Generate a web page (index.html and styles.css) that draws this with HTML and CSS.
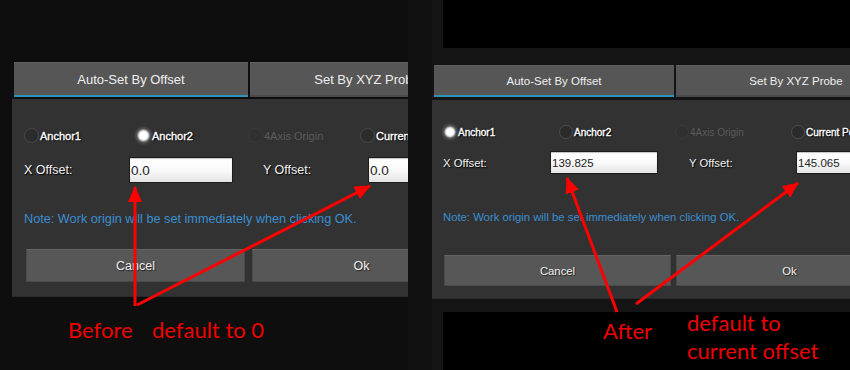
FILE: index.html
```html
<!DOCTYPE html>
<html lang="en">
<head>
<meta charset="UTF-8">
<meta name="viewport" content="width=device-width, initial-scale=1.0">
<title>Work Origin Offset - Before / After</title>
<link rel="stylesheet" href="styles.css">
</head>
<body>
<div class="page">

    <!-- before: offsets default to 0 -->
    <div class="shot before">
        <div class="dialog">
            <div class="tabs">
                <div class="tab active">Auto-Set By Offset</div>
                <div class="tab">Set By XYZ Probe</div>
            </div>
            <div class="panel">
                <div class="radios">
                    <label class="radio"><span class="dot"></span>Anchor1</label>
                    <label class="radio"><span class="dot on"></span>Anchor2</label>
                    <label class="radio off"><span class="dot"></span>4Axis Origin</label>
                    <label class="radio"><span class="dot"></span>Current Position</label>
                </div>
                <div class="offsets">
                    <span class="field-label">X Offset:</span>
                    <input class="field" type="text" value="0.0">
                    <span class="field-label second">Y Offset:</span>
                    <input class="field" type="text" value="0.0">
                </div>
                <p class="note">Note: Work origin will be set immediately when clicking OK.</p>
                <div class="actions">
                    <button>Cancel</button>
                    <button>Ok</button>
                </div>
            </div>
        </div>
    </div>

    <!-- after: offsets default to current offset -->
    <div class="shot after">
        <div class="band"></div>
        <div class="dialog">
            <div class="tabs">
                <div class="tab active">Auto-Set By Offset</div>
                <div class="tab">Set By XYZ Probe</div>
            </div>
            <div class="panel">
                <div class="radios">
                    <label class="radio"><span class="dot on"></span>Anchor1</label>
                    <label class="radio"><span class="dot"></span>Anchor2</label>
                    <label class="radio off"><span class="dot"></span>4Axis Origin</label>
                    <label class="radio"><span class="dot"></span>Current Position</label>
                </div>
                <div class="offsets">
                    <span class="field-label">X Offset:</span>
                    <input class="field" type="text" value="139.825">
                    <span class="field-label second">Y Offset:</span>
                    <input class="field" type="text" value="145.065">
                </div>
                <p class="note">Note: Work origin will be set immediately when clicking OK.</p>
                <div class="actions">
                    <button>Cancel</button>
                    <button>Ok</button>
                </div>
            </div>
        </div>
        <div class="band bottom"></div>
    </div>

    <!-- red annotations drawn over the screenshots -->
    <svg class="marks" width="850" height="370" viewBox="0 0 850 370">
        <defs>
            <marker id="head" markerUnits="userSpaceOnUse" markerWidth="16" markerHeight="14" refX="15" refY="7" orient="auto">
                <path d="M0 0 L16 7 L0 14 Z" fill="#f00"/>
            </marker>
        </defs>
        <line x1="135" y1="306" x2="135" y2="187" marker-end="url(#head)"/>
        <line x1="137" y1="305" x2="370" y2="186" marker-end="url(#head)"/>
        <line x1="617" y1="312" x2="567" y2="178" marker-end="url(#head)"/>
        <line x1="636" y1="304" x2="798" y2="183" marker-end="url(#head)"/>
    </svg>
    <div class="caption cap-before">Before</div>
    <div class="caption cap-zero">default to 0</div>
    <div class="caption cap-after">After</div>
    <div class="caption cap-current">default to<br>current offset</div>

</div>
</body>
</html>
```

FILE: styles.css
```css
* {
    box-sizing: border-box;
}
body {
    margin: 0;
    background-color: #111;
    font-family: "Liberation Sans", Arial, sans-serif;
}
.page {
    position: relative;
    display: flex;
    width: 850px;
    height: 370px;
    overflow: hidden;
    background-color: #111;
}
.shot {
    flex: none;
    overflow: hidden;
}

/* each screenshot has its own scale */
.before {
    width: 408px;
    padding: 62px 0 0 12px;
    background-color: #0e0e0e;
    --tab-w: 234px;
    --tab-h: 35px;
    --tab-font: 13px;
    --panel-gap: 2px;
    --pad-top: 29px;
    --pad-bottom: 14px;
    --col: 112px;
    --dot: 15px;
    --radio-font: 11px;
    --row-gap: 14px;
    --label-w: 105px;
    --input-w: 104px;
    --input-h: 26px;
    --label-gap: 30px;
    --label-font: 12.5px;
    --input-font: 13.5px;
    --note-gap: 28px;
    --note-font: 12.7px;
    --note-h: 16px;
    --btn-gap: 22px;
    --btn-w: 219px;
    --btn-h: 33px;
    --btn-space: 7px;
    --btn-left: 2px;
    --btn-font: 12.5px;
}
.after {
    display: flex;
    flex-direction: column;
    width: 418px;
    margin-left: 24px;
    background-color: #141414;
    --tab-w: 240px;
    --tab-h: 32px;
    --tab-font: 11.5px;
    --panel-gap: 3px;
    --pad-top: 25px;
    --pad-bottom: 12px;
    --col: 116px;
    --dot: 14px;
    --radio-font: 10px;
    --row-gap: 12px;
    --label-w: 107px;
    --input-w: 108px;
    --input-h: 23px;
    --label-gap: 31px;
    --label-font: 11.3px;
    --input-font: 11.5px;
    --note-gap: 36px;
    --note-font: 11.3px;
    --note-h: 14px;
    --btn-gap: 31px;
    --btn-w: 227px;
    --btn-h: 31px;
    --btn-space: 5px;
    --btn-left: 1px;
    --btn-font: 11.3px;
}
.band {
    flex: none;
    height: 48px;
    margin-left: 11px;
    background-color: #000;
}
.band.bottom {
    flex: 1;
    margin-top: 13px;
}
.after .dialog {
    margin-top: 17px;
}

.dialog {
    width: 520px;
}
.tabs {
    display: flex;
    gap: 2px;
    margin-left: 2px;
}
.tab {
    display: flex;
    align-items: center;
    justify-content: center;
    flex: none;
    width: var(--tab-w);
    height: var(--tab-h);
    background-color: #565656;
    border-top: 1px solid #616161;
    border-bottom: 2px solid #4a4a4a;
    color: #eee;
    font-size: var(--tab-font);
}
.tab.active {
    border-bottom-color: #2f92bb;
}
.panel {
    margin-top: var(--panel-gap);
    padding: var(--pad-top) 0 var(--pad-bottom) 12px;
    background-color: #323232;
    border-bottom: 1px solid #2a2a2a;
}
.after .panel {
    padding-left: 11px;
}

.radios {
    display: grid;
    grid-template-columns: repeat(4, var(--col));
    height: var(--dot);
}
.radio {
    display: flex;
    align-items: center;
    white-space: nowrap;
    color: #fff;
    font-size: var(--radio-font);
    -webkit-text-stroke: 0.35px #fff;
    text-shadow: 0 0 2px #000, 1px 1px 1px #000;
}
.radio.off {
    color: #5b5b5b;
    -webkit-text-stroke: 0;
    text-shadow: none;
}
.dot {
    flex: none;
    width: var(--dot);
    height: var(--dot);
    margin-right: 1px;
    border: 1px solid #4b4b4b;
    border-radius: 50%;
    background-color: #2b2b2b;
}
.dot.on {
    border-color: #5a5a5a;
    background: radial-gradient(circle, #fff 0, #fff 38%, #d8d8d8 52%, #6e6e6e 70%, #3c3c3c 100%);
    box-shadow: 0 0 3px rgba(255, 255, 255, 0.35);
}
.radio.off .dot {
    border-color: #3b3b3b;
    background-color: #303030;
}

.offsets {
    display: flex;
    align-items: center;
    margin-top: var(--row-gap);
}
.field-label {
    flex: none;
    width: var(--label-w);
    color: #f2f2f2;
    font-size: var(--label-font);
    text-shadow: 1px 1px 1px #000;
}
.field-label.second {
    margin-left: var(--label-gap);
}
.field {
    flex: none;
    width: var(--input-w);
    height: var(--input-h);
    margin: 0;
    padding: 0 1px;
    border: 1px solid #1c1c1c;
    background: linear-gradient(#fff, #fafafa 50%, #e4e4e4);
    box-shadow: inset 0 1px 1px rgba(0, 0, 0, 0.25);
    color: #222;
    font-family: "Liberation Sans", Arial, sans-serif;
    font-size: var(--input-font);
}

.note {
    margin: var(--note-gap) 0 0;
    height: var(--note-h);
    line-height: var(--note-h);
    color: #3a8ed0;
    font-size: var(--note-font);
}

.actions {
    display: flex;
    gap: var(--btn-space);
    margin-top: var(--btn-gap);
    margin-left: var(--btn-left);
}
.actions button {
    flex: none;
    width: var(--btn-w);
    height: var(--btn-h);
    padding: 0;
    background-color: #575757;
    border: 1px solid #4a4a4a;
    border-top-color: #646464;
    color: #f0f0f0;
    font-family: "Liberation Sans", Arial, sans-serif;
    font-size: var(--btn-font);
    text-shadow: 1px 1px 1px #222;
}

/* annotation layer */
.marks {
    position: absolute;
    top: 0;
    left: 0;
    pointer-events: none;
}
.marks line {
    stroke: #f00;
    stroke-width: 3;
}
.caption {
    position: absolute;
    color: #ee0000;
    font-family: Lato, "Open Sans", sans-serif;
    font-size: 22px;
    line-height: 28px;
    white-space: nowrap;
}
.cap-before {
    left: 68px;
    top: 316px;
}
.cap-zero {
    left: 152px;
    top: 316px;
}
.cap-after {
    left: 603px;
    top: 317px;
}
.cap-current {
    left: 687px;
    top: 309px;
}
```
